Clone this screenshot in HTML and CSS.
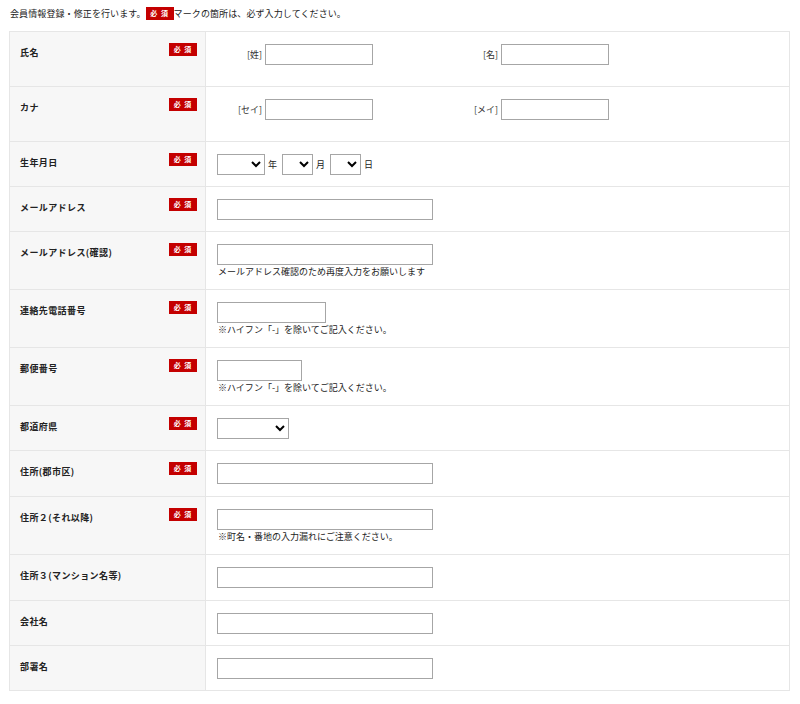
FILE: index.html
```html
<!DOCTYPE html>
<html lang="ja">
<head>
    <meta charset="UTF-8">
    <meta name="viewport" content="width=device-width, initial-scale=1.0">
    <title>会員情報登録・修正</title>
    <link rel="stylesheet" href="styles.css">
</head>
<body>
    <p class="lead">会員情報登録・修正を行います。<span class="req">必 須</span>マークの箇所は、必ず入力してください。</p>

    <form id="memberForm">
        <table class="form-table">
            <tr class="row-name">
                <th><span class="label">氏名</span><span class="req">必 須</span></th>
                <td>
                    <div class="name-fields">
                        <label class="name-group">[姓]<input type="text" class="input-name"></label>
                        <label class="name-group">[名]<input type="text" class="input-name"></label>
                    </div>
                </td>
            </tr>
            <tr class="row-name">
                <th><span class="label">カナ</span><span class="req">必 須</span></th>
                <td>
                    <div class="name-fields">
                        <label class="name-group">[セイ]<input type="text" class="input-name"></label>
                        <label class="name-group">[メイ]<input type="text" class="input-name"></label>
                    </div>
                </td>
            </tr>
            <tr>
                <th><span class="label">生年月日</span><span class="req">必 須</span></th>
                <td>
                    <div class="date-fields">
                        <select class="sel-year"><option></option></select><span>年</span>
                        <select class="sel-small"><option></option></select><span>月</span>
                        <select class="sel-small"><option></option></select><span>日</span>
                    </div>
                </td>
            </tr>
            <tr>
                <th><span class="label">メールアドレス</span><span class="req">必 須</span></th>
                <td><input type="email" class="input-long"></td>
            </tr>
            <tr>
                <th><span class="label">メールアドレス(確認)</span><span class="req">必 須</span></th>
                <td>
                    <input type="email" class="input-long">
                    <p class="note">メールアドレス確認のため再度入力をお願いします</p>
                </td>
            </tr>
            <tr>
                <th><span class="label">連絡先電話番号</span><span class="req">必 須</span></th>
                <td>
                    <input type="tel" class="input-tel">
                    <p class="note">※ハイフン「-」を除いてご記入ください。</p>
                </td>
            </tr>
            <tr>
                <th><span class="label">郵便番号</span><span class="req">必 須</span></th>
                <td>
                    <input type="text" class="input-zip">
                    <p class="note">※ハイフン「-」を除いてご記入ください。</p>
                </td>
            </tr>
            <tr>
                <th><span class="label">都道府県</span><span class="req">必 須</span></th>
                <td><select class="sel-pref"><option></option></select></td>
            </tr>
            <tr class="row-tall">
                <th><span class="label">住所(郡市区)</span><span class="req">必 須</span></th>
                <td><input type="text" class="input-long"></td>
            </tr>
            <tr>
                <th><span class="label">住所２(それ以降)</span><span class="req">必 須</span></th>
                <td>
                    <input type="text" class="input-long">
                    <p class="note">※町名・番地の入力漏れにご注意ください。</p>
                </td>
            </tr>
            <tr class="row-tall">
                <th><span class="label">住所３(マンション名等)</span></th>
                <td><input type="text" class="input-long"></td>
            </tr>
            <tr>
                <th><span class="label">会社名</span></th>
                <td><input type="text" class="input-long"></td>
            </tr>
            <tr>
                <th><span class="label">部署名</span></th>
                <td><input type="text" class="input-long"></td>
            </tr>
        </table>
    </form>
</body>
</html>
```

FILE: styles.css
```css
body {
    margin: 0;
    padding: 7px 9px;
    font-family: "Noto Sans CJK JP", "Noto Sans", sans-serif;
    font-size: 9px;
    color: #222;
    background-color: #fff;
}
.lead {
    margin: 0 0 10px;
    line-height: 14px;
    height: 14px;
    padding-left: 1px;
    letter-spacing: 0.1px;
}
.req {
    display: inline-block;
    width: 28px;
    height: 13px;
    line-height: 13px;
    background-color: #c40000;
    color: #fff;
    font-size: 7px;
    font-weight: bold;
    text-align: center;
    vertical-align: top;
    letter-spacing: 1px;
}
.form-table {
    width: 781px;
    border-collapse: collapse;
    border: 1px solid #e6e6e6;
}
.form-table th,
.form-table td {
    border-top: 1px solid #e6e6e6;
    vertical-align: top;
    text-align: left;
}
.form-table th {
    width: 196px;
    box-sizing: border-box;
    padding: 11px 8px 11px 10px;
    background-color: #f7f7f7;
    border-right: 1px solid #e6e6e6;
}
.form-table th .req {
    float: right;
}
.label {
    display: inline-block;
    padding-top: 3px;
    line-height: 13px;
    font-weight: bold;
    letter-spacing: 0.4px;
}
.form-table td {
    padding: 12px 12px 11px 11px;
    background-color: #fff;
}
.row-name td {
    padding-bottom: 21px;
}
.row-tall td {
    padding-bottom: 12px;
}
input[type="text"],
input[type="email"],
input[type="tel"] {
    display: block;
    height: 21px;
    margin: 0;
    padding: 0 4px;
    border: 1px solid #a6a6a6;
    border-radius: 0;
    box-sizing: border-box;
    font-size: 10px;
    background: #fff;
}
.input-long {
    width: 216px;
}
.input-tel {
    width: 109px;
}
.input-zip {
    width: 85px;
}
.name-fields {
    display: flex;
    gap: 80px;
}
.name-group {
    display: flex;
    align-items: center;
    justify-content: flex-end;
    gap: 3px;
    width: 156px;
    color: #333;
}
.name-group input[type="text"] {
    width: 108px;
}
.date-fields {
    display: flex;
    align-items: center;
    gap: 3px;
}
.date-fields span {
    margin-right: 1px;
}
select {
    height: 21px;
    margin: 0;
    border: 1px solid #a6a6a6;
    border-radius: 0;
    background-color: #fff;
    box-sizing: border-box;
    font-size: 10px;
}
.sel-year {
    width: 48px;
}
.sel-small {
    width: 31px;
    margin-left: 1px;
}
.sel-pref {
    display: block;
    width: 72px;
}
.note {
    margin: 0;
    line-height: 13px;
    padding-left: 1px;
    color: #222;
}
```
